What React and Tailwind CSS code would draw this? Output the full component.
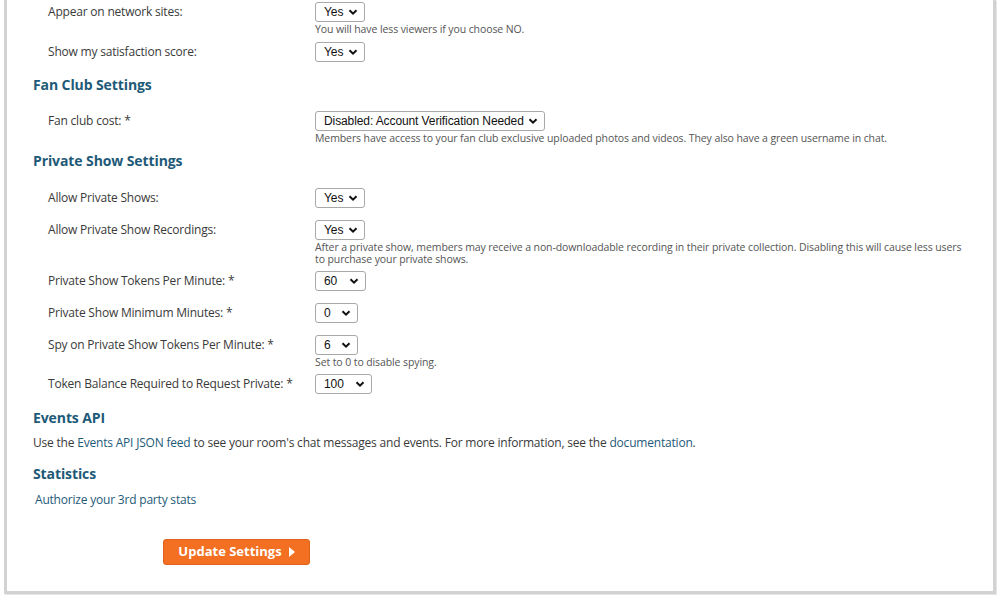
import React from 'react';

// Chevron glyph used inside each select box.
const Chevron = () => (
  <svg viewBox="0 0 10 10" className="w-[10px] h-[10px] pointer-events-none absolute right-[7px] top-[5px]">
    <path d="M1.5 3.2 L5 6.7 L8.5 3.2" fill="none" stroke="#111" strokeWidth="2" />
  </svg>
);

const Select = ({ value, width }) => (
  <div className="relative block h-[20px]" style={{ width }}>
    <select
      defaultValue={value}
      className="block appearance-none w-full h-[20px] pl-[8px] pr-[14px] border border-[#a8a8a8] rounded-[3px] bg-white text-[12px] tracking-[-0.1px] text-[#111] leading-none outline-none"
      style={{ fontFamily: '"Liberation Sans", Arial, sans-serif' }}
    >
      <option>{value}</option>
    </select>
    <Chevron />
  </div>
);

const Row = ({ label, value, width, note, className = '' }) => (
  <div className={`flex items-start ${className}`}>
    <div className="w-[308px] shrink-0 pl-[41px] pt-[2px] text-[12px] tracking-[-0.2px] text-[#3a3a3a] leading-[16px]">{label}</div>
    <div className="flex flex-col">
      <Select value={value} width={width} />
      {note && <div className="text-[10.5px] tracking-[-0.1px] text-[#555] leading-[12px] mt-[1px] max-w-[652px]">{note}</div>}
    </div>
  </div>
);

const Heading = ({ children, className = '' }) => (
  <h3 className={`pl-[26px] text-[14px] font-bold tracking-[-0.1px] text-[#1e5a78] leading-[18px] ${className}`}>{children}</h3>
);

export default function App() {
  return (
    <div className="w-[1000px] h-[600px] bg-white overflow-hidden" style={{ fontFamily: '"Open Sans", "DejaVu Sans", sans-serif' }}>
      <div className="mx-[4px] h-[594px] border-[3px] border-t-0 border-[#d2d2d2] bg-white shadow-[1px_1px_0_#e6e6e6]">
        <div className="pt-[2px]">
          <Row label="Appear on network sites:" value="Yes" width={50} note="You will have less viewers if you choose NO." />
          <Row className="mt-[7px]" label="Show my satisfaction score:" value="Yes" width={50} />

          <Heading className="mt-[14px]">Fan Club Settings</Heading>
          <Row
            className="mt-[17px]"
            label="Fan club cost: *"
            value="Disabled: Account Verification Needed"
            width={230}
            note="Members have access to your fan club exclusive uploaded photos and videos. They also have a green username in chat."
          />

          <Heading className="mt-[8px]">Private Show Settings</Heading>
          <Row className="mt-[18px]" label="Allow Private Shows:" value="Yes" width={50} />
          <Row
            className="mt-[12px]"
            label="Allow Private Show Recordings:"
            value="Yes"
            width={50}
            note="After a private show, members may receive a non-downloadable recording in their private collection. Disabling this will cause less users to purchase your private shows."
          />
          <Row className="mt-[6px]" label="Private Show Tokens Per Minute: *" value="60" width={51} />
          <Row className="mt-[12px]" label="Private Show Minimum Minutes: *" value="0" width={43} />
          <Row className="mt-[12px]" label="Spy on Private Show Tokens Per Minute: *" value="6" width={43} note="Set to 0 to disable spying." />
          <Row className="mt-[6px]" label="Token Balance Required to Request Private: *" value="100" width={57} />

          <Heading className="mt-[15px]">Events API</Heading>
          <p className="mt-[8px] pl-[26px] text-[12px] tracking-[-0.2px] text-[#3a3a3a] leading-[16px]">
            Use the <a href="#" className="text-[#1e5a78]">Events API JSON feed</a> to see your room's chat messages and events. For more information, see the{' '}
            <a href="#" className="text-[#1e5a78]">documentation</a>.
          </p>

          <Heading className="mt-[14px]">Statistics</Heading>
          <p className="mt-[9px] pl-[28px] text-[12px] tracking-[-0.2px] leading-[16px]">
            <a href="#" className="text-[#1e5a78]">Authorize your 3rd party stats</a>
          </p>

          <div className="mt-[31px] pl-[156px]">
            <button className="h-[26px] w-[147px] flex items-center justify-center gap-[7px] rounded-[3px] bg-[#f36f21] border border-[#e0601a] text-white text-[13px] font-bold">
              Update Settings
              <svg viewBox="0 0 6 10" className="w-[6px] h-[10px]"><path d="M0 0 L6 5 L0 10 Z" fill="#fff" /></svg>
            </button>
          </div>
        </div>
      </div>
    </div>
  );
}
